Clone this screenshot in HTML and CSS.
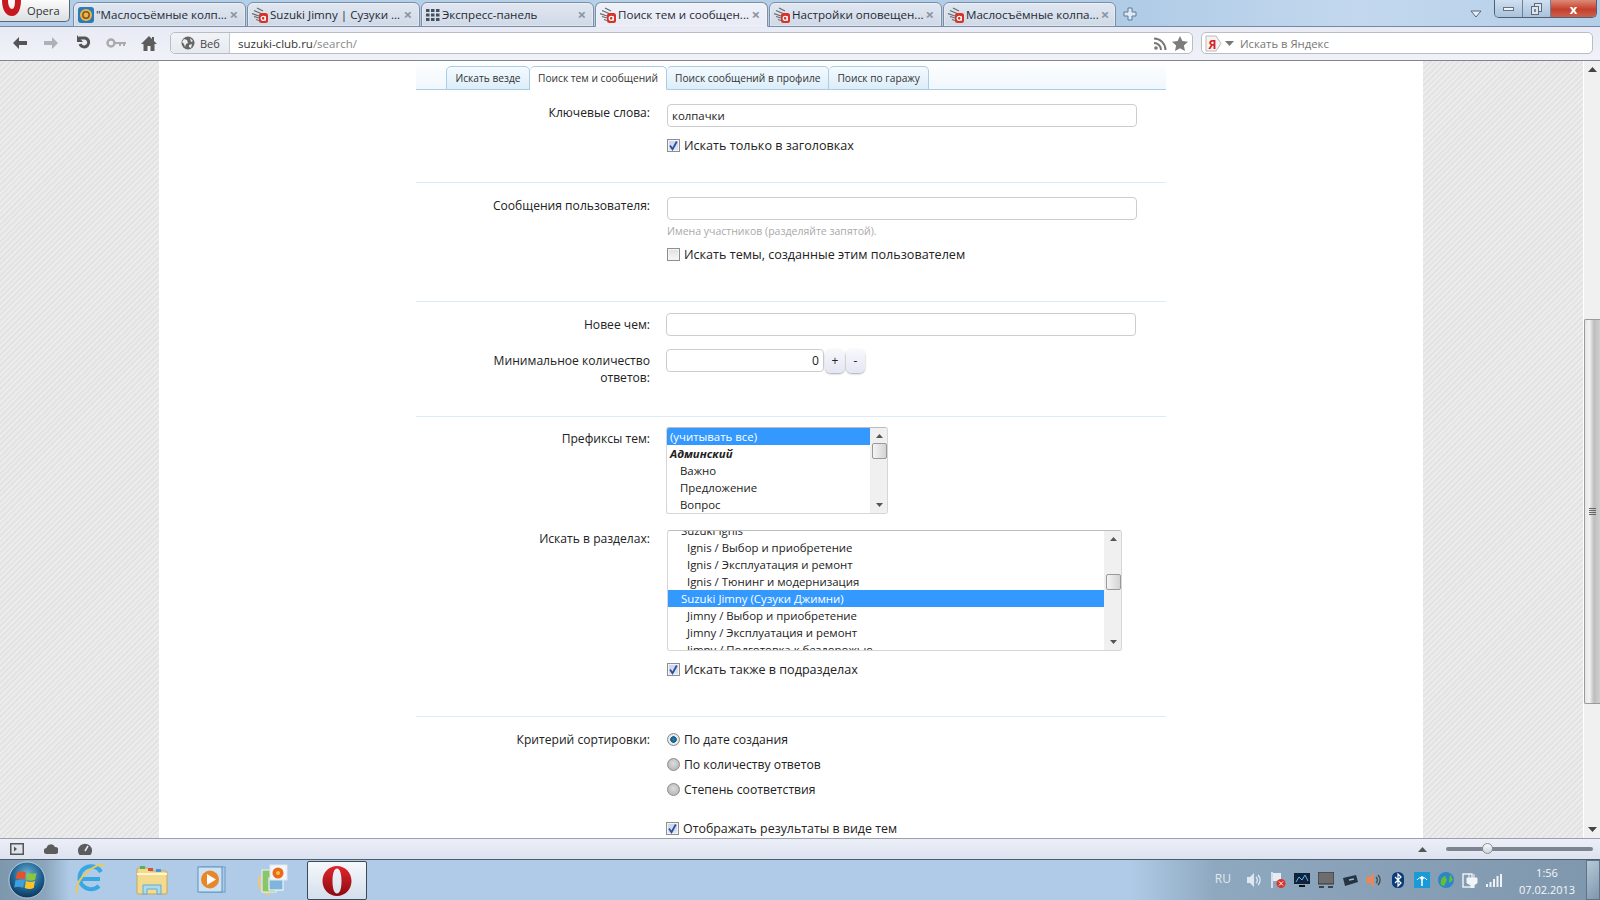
FILE: index.html
```html
<!DOCTYPE html>
<html lang="ru">
<head>
  <meta charset="UTF-8" />
  <title>Поиск тем и сообщений</title>
  <link rel="stylesheet" href="styles.css">
</head>
<body>

  <svg class="defs" width="0" height="0">
    <symbol id="ico-suzuki" viewBox="0 0 16 16">
      <path d="M5 1l6 3M2 3.500l7 3M0 6.500l7 2.500M2 9.500l5 1.500M4 12.500l3 1" stroke="#6a6a6a" stroke-width="1.300" fill="none"/>
      <rect x="7" y="6" width="9" height="10" rx="2.500" fill="#d8332a"/>
      <circle cx="11.200" cy="11.300" r="2" fill="none" stroke="#fff" stroke-width="1.200"/>
      <path d="M13.300 9.300v4.400" stroke="#fff" stroke-width="1.100"/>
    </symbol>
    <symbol id="ico-check" viewBox="0 0 13 13">
      <path d="M3 6.500l2.500 3.800L9.800 2.500" fill="none" stroke="#2f4f9c" stroke-width="1.800"/>
    </symbol>
  </svg>

  <div class="tabstrip">
    <div class="opera-btn">
      <svg class="opera-o" width="22" height="16" viewBox="0 0 22 16"><path d="M1 0c0 10 4 16 10 16s9-7 9-16h-6c0 6-1 9-3 9S7 6 7 0z" fill="#c8181f"/></svg>
      <span>Opera</span>
    </div>
    <div class="tab">
      <svg width="16" height="16" viewBox="0 0 16 16"><rect width="16" height="16" rx="3" fill="#2a7cb8"/><circle cx="8" cy="8" r="6" fill="#f0b24a"/><circle cx="8" cy="8" r="3.200" fill="none" stroke="#7a5a20" stroke-width="1.500"/></svg>
      <span class="tab-title">"Маслосъёмные колп...</span><span class="tab-x">×</span>
    </div>
    <div class="tab">
      <svg width="16" height="16"><use href="#ico-suzuki"/></svg>
      <span class="tab-title">Suzuki Jimny | Сузуки ...</span><span class="tab-x">×</span>
    </div>
    <div class="tab">
      <svg width="14" height="12" viewBox="0 0 14 12" fill="#44505e"><rect width="3.500" height="3"/><rect x="5" width="3.500" height="3"/><rect x="10" width="3.500" height="3"/><rect y="4.500" width="3.500" height="3"/><rect x="5" y="4.500" width="3.500" height="3"/><rect x="10" y="4.500" width="3.500" height="3"/><rect y="9" width="3.500" height="3"/><rect x="5" y="9" width="3.500" height="3"/><rect x="10" y="9" width="3.500" height="3"/></svg>
      <span class="tab-title">Экспресс-панель</span><span class="tab-x">×</span>
    </div>
    <div class="tab active">
      <svg width="16" height="16"><use href="#ico-suzuki"/></svg>
      <span class="tab-title">Поиск тем и сообщен...</span><span class="tab-x">×</span>
    </div>
    <div class="tab">
      <svg width="16" height="16"><use href="#ico-suzuki"/></svg>
      <span class="tab-title">Настройки оповещен...</span><span class="tab-x">×</span>
    </div>
    <div class="tab">
      <svg width="16" height="16"><use href="#ico-suzuki"/></svg>
      <span class="tab-title">Маслосъёмные колпа...</span><span class="tab-x">×</span>
    </div>
    <svg class="newtab" width="14" height="14" viewBox="0 0 14 14"><path d="M5 1h4v4h4v4H9v4H5V9H1V5h4z" fill="#dfe9f4" stroke="#5f7a96"/></svg>
    <svg class="tabmenu" width="12" height="8" viewBox="0 0 12 8"><path d="M1 1h10L6 7z" fill="#e8eff7" stroke="#56677a"/></svg>
    <div class="winbtns">
      <div class="winbtn min"><i></i></div>
      <div class="winbtn restore">
        <svg width="11" height="12" viewBox="0 0 11 12"><rect x="3.500" y=".5" width="7" height="8" fill="#dbe6f0" stroke="#5f6b77"/><rect x=".5" y="3.500" width="7" height="8" fill="#dbe6f0" stroke="#5f6b77"/><rect x="3" y="6" width="2" height="3" fill="#7c8a98"/></svg>
      </div>
      <div class="winbtn close">x</div>
    </div>
  </div>

  <div class="toolbar">
    <div class="navbtns">
      <svg width="16" height="14" viewBox="0 0 16 14"><path d="M7 1L1 7l6 6V9h8V5H7z" fill="#555"/></svg>
      <svg width="16" height="14" viewBox="0 0 16 14"><path d="M9 1l6 6-6 6V9H1V5h8z" fill="#aeb2b8"/></svg>
      <svg class="reload" width="16" height="16" viewBox="0 0 16 16"><path d="M3 3h6a4.500 4.500 0 1 1-5 6" fill="none" stroke="#555" stroke-width="3"/><path d="M1 0v7h6z" fill="#555"/></svg>
      <svg width="20" height="10" viewBox="0 0 20 10"><circle cx="5" cy="5" r="3.500" fill="none" stroke="#aaa" stroke-width="2.400"/><path d="M9 4h11v2h-1v2h-2V6h-2v2h-2V6H9z" fill="#aaa"/></svg>
      <svg width="16" height="15" viewBox="0 0 16 15"><path d="M8 0L0 8h2.500v7h4v-5h3v5h4V8H16l-3-3V1h-2v2z" fill="#5c5c5c"/></svg>
    </div>
    <div class="addressbar">
      <div class="addr-kind">
        <svg width="14" height="14" viewBox="0 0 14 14"><circle cx="7" cy="7" r="6.500" fill="#666"/><path d="M3 3l3 1 1 3-2 1-1 3-1-3-2-2zM9 2l3 3-2 1zM8 9l3-1-1 4-2-1z" fill="#eee"/></svg>
        <span>Веб</span>
      </div>
      <div class="addr-url"><b>suzuki-club.ru</b>/search/</div>
      <svg class="addr-ico" width="13" height="13" viewBox="0 0 13 13"><circle cx="2" cy="11" r="1.800" fill="#777"/><path d="M0 6a7 7 0 0 1 7 7M0 1.500A11.500 11.500 0 0 1 11.500 13" fill="none" stroke="#777" stroke-width="2"/></svg>
      <svg class="addr-ico" width="16" height="15" viewBox="0 0 16 15"><path d="M8 0l2.400 5 5.600.7-4.100 3.800 1.100 5.500L8 12.300 3 15l1.100-5.500L0 5.700 5.600 5z" fill="#7d7d7d"/></svg>
    </div>
    <div class="searchbar">
      <svg width="17" height="17" viewBox="0 0 17 17"><path d="M1 1h10l5 7.500-5 7.500H1z" fill="#f4f2f2" stroke="#bbb"/><text x="3.500" y="13.500" class="ya">Я</text></svg>
      <svg width="9" height="5" viewBox="0 0 9 5"><path d="M0 0h9L4.500 5z" fill="#777"/></svg>
      <span>Искать в Яндекс</span>
    </div>
  </div>

  <div class="viewport">
    <div class="page">
      <div class="content">
        <form class="search-form">
          <div class="form-tabs">
            <div class="form-tab">Искать везде</div>
            <div class="form-tab active">Поиск тем и сообщений</div>
            <div class="form-tab">Поиск сообщений в профиле</div>
            <div class="form-tab">Поиск по гаражу</div>
          </div>

          <div class="section s1">
            <div class="row">
              <div class="label">Ключевые слова:</div>
              <div class="field shift">
                <input class="text-input" type="text" value="колпачки" />
                <label class="check-row mt10"><span class="check on"><svg width="13" height="13"><use href="#ico-check"/></svg></span>Искать только в заголовках</label>
              </div>
            </div>
          </div>

          <div class="section s2">
            <div class="row">
              <div class="label">Сообщения пользователя:</div>
              <div class="field shift">
                <input class="text-input" type="text" />
                <div class="hint">Имена участников (разделяйте запятой).</div>
                <label class="check-row mt8"><span class="check"></span>Искать темы, созданные этим пользователем</label>
              </div>
            </div>
          </div>

          <div class="section s3">
            <div class="row">
              <div class="label pt3">Новее чем:</div>
              <div class="field"><input class="text-input" type="text" /></div>
            </div>
            <div class="row mt13">
              <div class="label pt3 wrap">Минимальное количество ответов:</div>
              <div class="field spin">
                <input class="text-input num" type="text" value="0" />
                <span class="spin-btn">+</span>
                <span class="spin-btn">-</span>
              </div>
            </div>
          </div>

          <div class="section s4">
            <div class="row">
              <div class="label pt3">Префиксы тем:</div>
              <div class="field">
                <div class="listbox prefixes">
                  <div class="list-items">
                    <div class="opt sel">(учитывать все)</div>
                    <div class="opt group">Админский</div>
                    <div class="opt in1">Важно</div>
                    <div class="opt in1">Предложение</div>
                    <div class="opt in1">Вопрос</div>
                  </div>
                  <div class="list-scroll">
                    <svg width="7" height="4" viewBox="0 0 7 4"><path d="M3.500 0L7 4H0z" fill="#555"/></svg>
                    <div class="list-thumb first"></div>
                    <svg width="7" height="4" viewBox="0 0 7 4"><path d="M0 0h7L3.500 4z" fill="#555"/></svg>
                  </div>
                </div>
              </div>
            </div>
            <div class="row mt16">
              <div class="label">Искать в разделах:</div>
              <div class="field shift">
                <div class="listbox forums">
                  <div class="list-items scrolled">
                    <div class="opt in1">Suzuki Ignis</div>
                    <div class="opt in2">Ignis / Выбор и приобретение</div>
                    <div class="opt in2">Ignis / Эксплуатация и ремонт</div>
                    <div class="opt in2">Ignis / Тюнинг и модернизация</div>
                    <div class="opt in1 sel">Suzuki Jimny (Сузуки Джимни)</div>
                    <div class="opt in2">Jimny / Выбор и приобретение</div>
                    <div class="opt in2">Jimny / Эксплуатация и ремонт</div>
                    <div class="opt in2">Jimny / Подготовка к бездорожью</div>
                  </div>
                  <div class="list-scroll">
                    <svg width="7" height="4" viewBox="0 0 7 4"><path d="M3.500 0L7 4H0z" fill="#555"/></svg>
                    <div class="list-thumb second"></div>
                    <svg width="7" height="4" viewBox="0 0 7 4"><path d="M0 0h7L3.500 4z" fill="#555"/></svg>
                  </div>
                </div>
                <label class="check-row mt10"><span class="check on"><svg width="13" height="13"><use href="#ico-check"/></svg></span>Искать также в подразделах</label>
              </div>
            </div>
          </div>

          <div class="section s5">
            <div class="row">
              <div class="label">Критерий сортировки:</div>
              <div class="field shift radios">
                <label class="check-row"><span class="radio on"></span>По дате создания</label>
                <label class="check-row"><span class="radio"></span>По количеству ответов</label>
                <label class="check-row"><span class="radio"></span>Степень соответствия</label>
              </div>
            </div>
            <div class="row mt22">
              <div class="label"></div>
              <div class="field">
                <label class="check-row tight"><span class="check on"><svg width="13" height="13"><use href="#ico-check"/></svg></span>Отображать результаты в виде тем</label>
              </div>
            </div>
          </div>
        </form>
      </div>
    </div>
    <div class="scrollbar">
      <div class="sb-arrow"><svg width="9" height="5" viewBox="0 0 9 5"><path d="M4.500 0L9 5H0z" fill="#444"/></svg></div>
      <div class="sb-space top"></div>
      <div class="sb-thumb"><i></i><i></i><i></i><i></i></div>
      <div class="sb-space"></div>
      <div class="sb-arrow"><svg width="9" height="5" viewBox="0 0 9 5"><path d="M0 0h9L4.500 5z" fill="#444"/></svg></div>
    </div>
  </div>

  <div class="statusbar">
    <div class="status-left">
      <svg width="14" height="12" viewBox="0 0 14 12"><rect x=".75" y=".75" width="12.500" height="10.500" fill="#dfe3ec" stroke="#555" stroke-width="1.500"/><path d="M4 3.500L7 6 4 8.500z" fill="#555"/></svg>
      <svg width="14" height="10" viewBox="0 0 14 10"><path d="M3 10a3 3 0 0 1-.5-6 4.500 4.500 0 0 1 8.500-1 3.500 3.500 0 0 1 0 7z" fill="#5c5c5c"/></svg>
      <svg width="14" height="12" viewBox="0 0 14 12"><path d="M1.500 12A7 7 0 1 1 12.500 12z" fill="#5c5c5c"/><path d="M7 8l3-5" stroke="#e6e9f2" stroke-width="1.500"/></svg>
    </div>
    <div class="status-right">
      <svg width="9" height="5" viewBox="0 0 9 5"><path d="M4.500 0L9 5H0z" fill="#555"/></svg>
      <div class="zoom-slider"><span class="zoom-thumb"></span></div>
    </div>
  </div>

  <div class="taskbar">
    <div class="startorb">
      <svg width="38" height="38" viewBox="0 0 38 38">
        <defs>
          <radialGradient id="orb" cx="50%" cy="35%" r="70%"><stop offset="0" stop-color="#6fb5d8"/><stop offset=".6" stop-color="#1c5f8e"/><stop offset="1" stop-color="#0b2c4c"/></radialGradient>
        </defs>
        <circle cx="19" cy="19" r="18" fill="url(#orb)" stroke="#cfe0ec" stroke-width=".8"/>
        <path d="M9 12q4-2.500 9-.5l-1.300 7q-4.700-2-9-.2z" fill="#e8502a"/>
        <path d="M19.500 11.700q5 2 9 .1l-1.300 7q-4.500 2-9-.2z" fill="#8cc63f"/>
        <path d="M7.500 19.500q4.500-1.800 9 .2l-1.300 7q-4.500-2-9-.2z" fill="#3fa0e0"/>
        <path d="M18 20q4.500 2.100 9 .1l-1.300 7q-4.500 2-9-.2z" fill="#fdc325"/>
      </svg>
    </div>
    <div class="task-item">
      <svg width="32" height="34" viewBox="0 0 32 34">
        <path d="M27 9a11.500 11.500 0 1 0-2 14" fill="none" stroke="#39a7e2" stroke-width="4"/>
        <path d="M5 16h21" stroke="#39a7e2" stroke-width="4"/>
        <path d="M4 30C0 30 3 18 12 10S28 0 30 3" fill="none" stroke="#e8c95a" stroke-width="2"/>
      </svg>
    </div>
    <div class="task-item nudge">
      <svg width="32" height="30" viewBox="0 0 32 30">
        <path d="M1 5q0-2 2-2h9l2 3h16q1 0 1 2v20q0 1-1 1H2q-1 0-1-1z" fill="#f2da8e" stroke="#c6a85a"/>
        <rect x="4" y="1" width="5" height="3" fill="#55b255"/><rect x="12" y="3" width="5" height="3" fill="#d8503a"/><rect x="20" y="4" width="5" height="3" fill="#3e9ad8"/>
        <path d="M1 9h30" stroke="#fff6cf" stroke-width="2"/>
        <path d="M7 29v-9h18v9h-4v-5H11v5z" fill="#a9dcf2" stroke="#6aa9c9"/>
      </svg>
    </div>
    <div class="task-item nudge">
      <svg width="30" height="28" viewBox="0 0 30 28">
        <rect x="4" y="1" width="24" height="25" fill="#a9cbe6" stroke="#6f9bc2"/>
        <rect x="1" y="1" width="24" height="25" fill="#cfe2f2" stroke="#5b93c2"/>
        <circle cx="13" cy="13.500" r="9" fill="#e8862a"/>
        <path d="M10 8l9 5.500-9 5.500z" fill="#fff"/>
      </svg>
    </div>
    <div class="task-item photo">
      <svg width="30" height="32" viewBox="0 0 30 32">
        <path d="M2 12c-3 8 1 17 10 18" fill="none" stroke="#eec77a" stroke-width="2.500"/>
        <rect x="4" y="6" width="14" height="22" fill="#8cc46c" stroke="#eef5fa"/>
        <rect x="11" y="14" width="14" height="12" fill="#7fb5dc" stroke="#fff"/>
        <rect x="12" y="1" width="17" height="15" fill="#f3f6fa" stroke="#dfe8ef"/>
        <circle cx="20" cy="9" r="5.500" fill="#ec6a1c"/>
        <circle cx="20" cy="9" r="2" fill="#f7c23b"/>
      </svg>
    </div>
    <div class="task-item opera-task">
      <svg width="30" height="32" viewBox="0 0 30 32">
        <defs><linearGradient id="oprd" x1="0" y1="0" x2="0" y2="1"><stop offset="0" stop-color="#e0262c"/><stop offset="1" stop-color="#8c0a10"/></linearGradient></defs>
        <path fill-rule="evenodd" d="M15 1c8 0 14.500 6.500 14.500 15S23 31 15 31 .5 24.500.5 16 7 1 15 1zm0 2.500c-3 0-4.500 5.500-4.500 12.500s1.500 12.500 4.500 12.500 4.500-5.500 4.500-12.500S18 3.500 15 3.500z" fill="url(#oprd)"/>
      </svg>
    </div>
    <div class="tray">
      <span class="lang">RU</span>
      <div class="tray-icons">
        <svg width="16" height="16" viewBox="0 0 16 16"><path d="M1 5h3l4-4v14l-4-4H1z" fill="#dfe8f0"/><path d="M10 5a4 4 0 0 1 0 6M12 3a7 7 0 0 1 0 10" fill="none" stroke="#e8eef4" stroke-width="1.200"/></svg>
        <svg width="16" height="18" viewBox="0 0 16 18"><path d="M2 1v16" stroke="#eef2f6" stroke-width="1.500"/><path d="M3 2h8v8H3z" fill="#e6ecf2"/><circle cx="11" cy="12.500" r="4.500" fill="#d8352a"/><path d="M9 10.500l4 4m0-4l-4 4" stroke="#fff"/></svg>
        <svg width="16" height="15" viewBox="0 0 16 15"><rect x="0" y="0" width="16" height="11" fill="#10233c"/><path d="M2 9l3-5 3 3 3-5 3 6" fill="none" stroke="#62b2e6"/><rect x="5" y="12" width="6" height="2" fill="#111"/></svg>
        <svg width="16" height="17" viewBox="0 0 16 17"><rect width="16" height="12" fill="#6d6d6d" stroke="#333"/><path d="M1 15h5M10 15h5" stroke="#222" stroke-width="1.500"/></svg>
        <svg width="16" height="11" viewBox="0 0 16 11"><path d="M1 3l13-3 2 7-13 4z" fill="#263340"/><path d="M7 5l5-1" stroke="#7fc0e0" stroke-width="1.500"/></svg>
        <svg width="16" height="16" viewBox="0 0 16 16"><path d="M0 5h3l5-4v14l-5-4H0z" fill="#e08a5e"/><path d="M10 5a4 4 0 0 1 0 6M12 3a7 7 0 0 1 0 10" fill="none" stroke="#39424c" stroke-width="1.200"/></svg>
        <svg class="bt" width="12" height="16" viewBox="0 0 12 16"><rect width="12" height="16" rx="5.500" fill="#0a3a78"/><path d="M3 5l6 6-3 3V2l3 3-6 6" fill="none" stroke="#fff" stroke-width="1.200"/></svg>
        <svg width="16" height="16" viewBox="0 0 16 16"><rect width="16" height="16" fill="#1a9ad6"/><circle cx="8" cy="6" r="1.800" fill="#fff"/><path d="M8 7v7" stroke="#fff" stroke-width="1.500"/><path d="M3 8a6 6 0 0 1 10 0" fill="none" stroke="#fff"/></svg>
        <svg width="16" height="16" viewBox="0 0 16 16"><circle cx="8" cy="8" r="8" fill="#2c86c8"/><path d="M3 13c-1-5 1-8 4-9l2 4-3 6zM12 2l3 6-4 3z" fill="#63c030"/></svg>
        <svg width="16" height="16" viewBox="0 0 16 16"><rect x="1" y="2" width="9" height="13" fill="none" stroke="#f2f5f8" stroke-width="1.400"/><path d="M5 6h10v5l-3 2v3H9v-3L5 11zM7 2v4M12 2v4" fill="#f2f5f8" stroke="#f2f5f8"/></svg>
        <svg width="16" height="13" viewBox="0 0 16 13" fill="#eef2f6"><rect y="10" width="2" height="3"/><rect x="3.500" y="8" width="2" height="5"/><rect x="7" y="5" width="2" height="8"/><rect x="10.500" y="2" width="2" height="11"/><rect x="14" width="2" height="13"/></svg>
      </div>
      <div class="clock"><div>1:56</div><div>07.02.2013</div></div>
      <div class="show-desktop"></div>
    </div>
  </div>

</body>
</html>
```

FILE: styles.css
```css
* {
  box-sizing: border-box;
}

html, body {
  margin: 0;
  height: 100%;
  overflow: hidden;
}

body {
  display: flex;
  flex-direction: column;
  height: 900px;
  font-family: "Open Sans", "Noto Sans", sans-serif;
  font-size: 12.1px;
  color: #222;
}

svg {
  display: block;
  flex: none;
}

.defs {
  position: absolute;
}

/* browser tab strip */
.tabstrip {
  height: 27px;
  flex: none;
  display: flex;
  align-items: flex-end;
  padding-left: 73px;
  position: relative;
  border-bottom: 1px solid #75879c;
  background: linear-gradient(90deg, #b1cde8 0, #b7d1ea 40%, #afcbe6 70%, #c3d8ee 85%, #b3cee8 100%);
}

.opera-btn {
  position: absolute;
  left: 0;
  top: 0;
  width: 70px;
  height: 22px;
  display: flex;
  align-items: center;
  padding-left: 27px;
  font-size: 11.2px;
  color: #333;
  border: 1px solid #5c6672;
  border-top: none;
  border-left: none;
  border-radius: 0 0 5px 0;
  background: linear-gradient(#fbfbfb, #dcdfe3);
}

.opera-o {
  position: absolute;
  left: 1px;
  top: 0;
}

.tab {
  width: 173px;
  height: 25px;
  margin-right: 1px;
  margin-bottom: -1px;
  padding: 0 7px 0 4px;
  display: flex;
  align-items: center;
  gap: 2px;
  font-size: 11.6px;
  color: #1f2a36;
  border: 1px solid #7c8ea3;
  border-radius: 6px 6px 0 0;
  background: linear-gradient(#e0e7f1, #cfd9e6);
  box-shadow: inset 0 0 0 1px rgba(255,255,255,.35);
}

.tab.active {
  background: linear-gradient(#eef1f8, #e8ebf5);
  border-bottom-color: #e8ebf5;
}

.tab-title {
  flex: 1;
  white-space: nowrap;
}

.tab-x {
  font-size: 15px;
  font-weight: bold;
  line-height: 1;
  color: #8b95a3;
}

.newtab {
  margin: 0 0 5px 6px;
}

.tabmenu {
  position: absolute;
  left: 1470px;
  top: 10px;
}

.winbtns {
  position: absolute;
  right: 3px;
  top: 0;
  width: 103px;
  height: 18px;
  display: flex;
  border: 1px solid #4f6072;
  border-top: none;
  border-radius: 0 0 5px 5px;
  overflow: hidden;
}

.winbtn {
  display: flex;
  align-items: center;
  justify-content: center;
  background: linear-gradient(#cfe0f1, #a9c2db);
  border-right: 1px solid #6d8095;
}

.winbtn.min {
  width: 28px;
}

.winbtn.min i {
  width: 11px;
  height: 4px;
  background: #f2f5f8;
  border: 1px solid #66717d;
}

.winbtn.restore {
  width: 28px;
}

.winbtn.close {
  flex: 1;
  border: none;
  font-weight: bold;
  font-size: 13px;
  line-height: 16px;
  color: #fff;
  background: linear-gradient(#dd8a78, #c5402c 55%, #c8614d);
}

/* address toolbar */
.toolbar {
  height: 34px;
  flex: none;
  display: flex;
  align-items: center;
  padding: 0 7px 1px 0;
  border-bottom: 1px solid #7e8690;
  background: linear-gradient(#e8ebf5, #f0f2f8);
}

.navbtns {
  width: 170px;
  flex: none;
  display: flex;
  align-items: center;
  justify-content: space-between;
  padding: 0 13px 0 12px;
}

.navbtns .reload {
  margin-left: 2px;
}

.addressbar {
  width: 1023px;
  height: 22px;
  flex: none;
  display: flex;
  align-items: center;
  gap: 5px;
  padding-right: 4px;
  background: #fff;
  border: 1px solid #b8bdc6;
  border-radius: 5px;
}

.addr-kind {
  width: 59px;
  height: 100%;
  flex: none;
  display: flex;
  align-items: center;
  gap: 5px;
  padding-left: 10px;
  color: #444;
  font-size: 11px;
  border-right: 1px solid #c3c7ce;
  border-radius: 5px 0 0 5px;
  background: linear-gradient(#f1f3f7, #e6e9ef);
}

.addr-url {
  flex: 1;
  margin-left: 3px;
  color: #888;
  font-size: 11.5px;
}

.addr-url b {
  font-weight: normal;
  color: #333;
}

.searchbar {
  width: 392px;
  height: 22px;
  margin-left: 8px;
  flex: none;
  display: flex;
  align-items: center;
  gap: 3px;
  padding-left: 3px;
  color: #777;
  font-size: 11.3px;
  background: #fff;
  border: 1px solid #b8bdc6;
  border-radius: 5px;
}

.searchbar span {
  margin-left: 3px;
}

.ya {
  font-size: 12px;
  font-weight: bold;
  fill: #d8201c;
}

/* page area */
.viewport {
  height: 777px;
  flex: none;
  display: flex;
  overflow: hidden;
}

.page {
  flex: 1;
  padding: 0 160px 0 159px;
  background: repeating-linear-gradient(-45deg, #e3e3e3 0, #e3e3e3 2px, #ececec 2px, #ececec 4px);
  border-right: 1px solid #fff;
}

.content {
  height: 100%;
  background: #fff;
}

.search-form {
  width: 750px;
  margin: 0 auto;
}

.form-tabs {
  height: 29px;
  display: flex;
  align-items: flex-end;
  padding-left: 30px;
  border-bottom: 1px solid #a9cde6;
  background: linear-gradient(#fff, #eff7fd);
}

.form-tab {
  height: 24px;
  margin-bottom: -1px;
  padding: 0 8px 1px;
  display: flex;
  align-items: center;
  justify-content: center;
  font-size: 10.2px;
  color: #333;
  border: 1px solid #a9cde6;
  border-left: none;
  border-radius: 5px 5px 0 0;
  background: linear-gradient(#f4fafe, #dcedf9);
}

.form-tab:first-child {
  min-width: 84px;
  border-left: 1px solid #a9cde6;
}

.form-tab.active {
  background: #fff;
  border-bottom-color: #fff;
}

.section {
  border-bottom: 1px solid #dcebf5;
}

.s1 { padding: 14px 0 28px; }
.s2 { padding: 14px 0 38px; }
.s3 { padding: 11px 0 30px; }
.s4 { padding: 10px 0 38px; }
.s5 { padding: 14px 0 0; border-bottom: none; }

.row {
  display: grid;
  grid-template-columns: 234px 1fr;
  column-gap: 16px;
}

.label {
  text-align: right;
  line-height: 17px;
  color: #222;
}

.label.wrap {
  padding-left: 70px;
}

.pt3 { padding-top: 3px; }
.mt8 { margin-top: 8px; }
.mt10 { margin-top: 10px; }
.mt13 { margin-top: 13px; }
.mt16 { margin-top: 16px; }
.mt22 { margin-top: 22px; }

.shift {
  padding-left: 1px;
}

.text-input {
  display: block;
  width: 470px;
  height: 23px;
  padding: 0 4px;
  font: inherit;
  font-size: 11.4px;
  color: #222;
  background: #fff;
  border: 1px solid #cdcdcd;
  border-radius: 4px;
  outline: none;
}

.hint {
  margin-top: 4px;
  font-size: 10.5px;
  line-height: 14px;
  color: #aaa;
}

.check-row {
  display: flex;
  align-items: center;
  height: 17px;
  gap: 4px;
  font-size: 12.6px;
}

.check-row.tight {
  gap: 4px;
  font-size: 12.4px;
}

.check {
  width: 13px;
  height: 13px;
  flex: none;
  border: 1px solid #8e8f8f;
  background: linear-gradient(#e0e0e0, #f8f8f8);
  box-shadow: inset 0 0 0 1px #f4f4f4;
}

.check.on {
  background: linear-gradient(#c9d4ec, #dfe7f5);
}

.check svg {
  margin: -1px;
}

.radio {
  width: 13px;
  height: 13px;
  flex: none;
  border-radius: 50%;
  border: 1px solid #8a8a8a;
  background: radial-gradient(circle at 50% 40%, #dcdcdc, #bcbcbc 70%, #e8e8e8);
}

.radio.on {
  background: radial-gradient(circle, #2a86b4 0, #0f5a86 38%, #eeeeee 46%, #d0d0d0 100%);
}

.radios {
  display: flex;
  flex-direction: column;
  gap: 8px;
}

.radios .check-row {
  font-size: 12.2px;
}

.spin {
  display: flex;
  align-items: flex-start;
  gap: 1px;
}

.text-input.num {
  width: 158px;
  text-align: right;
  font-size: 12.1px;
}

.spin-btn {
  width: 20px;
  height: 24px;
  padding-bottom: 1px;
  display: flex;
  align-items: center;
  justify-content: center;
  font-size: 12px;
  border-radius: 6px;
  background: linear-gradient(#f8f8fc, #e4e6f4);
  box-shadow: 0 1px 2px rgba(0,0,0,.35);
}

.spin-btn + .spin-btn {
  width: 19px;
}

.listbox {
  display: flex;
  background: #fff;
  border: 1px solid #d6d6d6;
  border-top-color: #bdbdbd;
  border-radius: 3px;
  overflow: hidden;
}

.prefixes {
  width: 222px;
  height: 87px;
}

.forums {
  width: 455px;
  height: 121px;
}

.list-items {
  flex: 1;
  min-width: 0;
  overflow: hidden;
  font-size: 11.4px;
}

.list-items.scrolled .opt:first-child {
  margin-top: -9px;
}

.opt {
  height: 17px;
  line-height: 17px;
  padding-left: 3px;
  color: #222;
  white-space: nowrap;
}

.opt.sel {
  background: #3399ff;
  color: #fff;
}

.opt.group {
  font-style: italic;
  font-weight: bold;
}

.opt.in1 { padding-left: 13px; }
.opt.in2 { padding-left: 19px; }

.list-scroll {
  width: 17px;
  flex: none;
  display: flex;
  flex-direction: column;
  align-items: center;
  padding: 6px 0 0 1px;
  background: #f0f0f0;
}

.list-scroll svg:last-child {
  margin-top: auto;
  margin-bottom: 6px;
}

.list-thumb {
  width: 15px;
  height: 16px;
  border: 1px solid #999;
  border-radius: 2px;
  background: linear-gradient(90deg, #f4f4f4, #d4d4d4);
}

.list-thumb.first { margin-top: 5px; }
.list-thumb.second { margin-top: 33px; }

/* window scrollbar */
.scrollbar {
  width: 16px;
  flex: none;
  display: flex;
  flex-direction: column;
  background: #f0f0f0;
}

.sb-arrow {
  height: 17px;
  flex: none;
  display: flex;
  align-items: center;
  justify-content: center;
}

.sb-space {
  flex: 1;
}

.sb-space.top {
  flex: none;
  height: 241px;
}

.sb-thumb {
  height: 385px;
  flex: none;
  display: flex;
  flex-direction: column;
  align-items: center;
  justify-content: center;
  gap: 1px;
  border: 1px solid #9a9a9a;
  border-right: none;
  border-radius: 2px 0 0 2px;
  background: linear-gradient(90deg, #e6e6e6, #f2f2f2 30%, #bdbdbd 60%, #d0d0d0);
}

.sb-thumb i {
  width: 7px;
  height: 1px;
  background: #666;
}

/* status bar */
.statusbar {
  height: 22px;
  flex: none;
  display: flex;
  justify-content: space-between;
  align-items: center;
  border-top: 1px solid #98a0aa;
  border-bottom: 1px solid #4f5c6c;
  background: linear-gradient(#eceff7, #dde2f0);
}

.status-left {
  display: flex;
  align-items: center;
  gap: 20px;
  padding-left: 10px;
}

.status-right {
  display: flex;
  align-items: center;
  gap: 19px;
  padding-right: 7px;
}

.zoom-slider {
  width: 147px;
  height: 4px;
  position: relative;
  border-radius: 2px;
  background: #7d8590;
}

.zoom-thumb {
  position: absolute;
  left: 36px;
  top: -4px;
  width: 11px;
  height: 11px;
  border-radius: 50%;
  border: 1px solid #8a8f96;
  background: linear-gradient(#fafafa, #cfd3da);
}

/* windows taskbar */
.taskbar {
  height: 40px;
  flex: none;
  display: flex;
  align-items: center;
  background: linear-gradient(90deg, #7d97ad 0, #8aa5bc 45px, #afcbe7 70px, #afcbe7 1130px, #8ea8bf 1215px, #7f97ad 100%);
}

.startorb {
  width: 60px;
  flex: none;
  padding-left: 8px;
}

.task-item {
  width: 60px;
  height: 40px;
  flex: none;
  display: flex;
  align-items: center;
  justify-content: center;
}

.task-item.nudge {
  padding-left: 3px;
}

.task-item.photo {
  margin-left: 3px;
  width: 64px;
  padding-right: 5px;
}

.task-item.opera-task {
  height: 39px;
  align-self: flex-end;
  margin-left: 0;
  border: 1px solid #3c4a58;
  border-radius: 2px;
  background: linear-gradient(#f6f8fb, #d3dfec);
}

.tray {
  flex: 1;
  height: 40px;
  display: flex;
  align-items: center;
  justify-content: flex-end;
  color: #f0f4f8;
}

.lang {
  font-size: 12px;
  color: #dfe8f0;
  margin-right: 15px;
  margin-bottom: 4px;
}

.tray-icons {
  display: flex;
  align-items: center;
  gap: 8px;
}

.tray-icons .bt {
  margin: 0 2px;
}

.clock {
  width: 78px;
  margin-left: 6px;
  padding-top: 2px;
  text-align: center;
  font-size: 11px;
  line-height: 17px;
  color: #f4f7fa;
}

.show-desktop {
  width: 14px;
  height: 40px;
  flex: none;
  border: 1px solid #5f7488;
  background: linear-gradient(135deg, #b7c9d8, #7f97ad);
}
```
